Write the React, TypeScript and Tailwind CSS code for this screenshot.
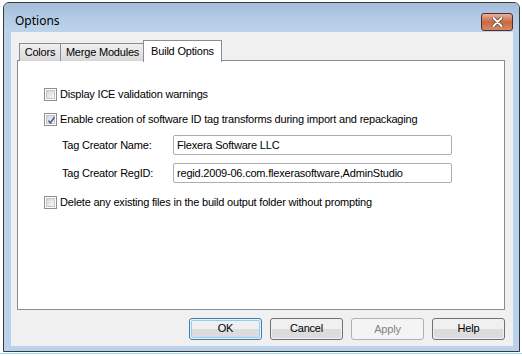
import React from "react";

const font = { fontFamily: '"Liberation Sans", Arial, sans-serif' };

function Checkbox({ checked }: { checked?: boolean }) {
  return (
    <div className="w-[13px] h-[13px] border border-[#8e8f8f] bg-white p-[1px] shrink-0">
      <div className="w-full h-full border border-[#c5c5c5] bg-gradient-to-br from-[#d8d8d8] to-[#f7f7f7] relative">
        {checked && (
          <svg viewBox="0 0 9 9" className="absolute inset-0 w-[9px] h-[9px]">
            <path d="M1.5 4.5 L3.5 7 L7.5 1" fill="none" stroke="#4b61a0" strokeWidth="1.6" />
          </svg>
        )}
      </div>
    </div>
  );
}

function Btn({ label, variant }: { label: string; variant?: "default" | "disabled" }) {
  if (variant === "disabled") {
    return (
      <div className="w-[73px] h-[22px] rounded-[3px] border border-[#adb2b5] bg-[#f4f4f4] flex items-center justify-center text-[#838383] text-[11px]">
        {label}
      </div>
    );
  }
  const border = variant === "default" ? "border-[#3c7fb1]" : "border-[#707070]";
  return (
    <div className={`w-[73px] h-[22px] rounded-[3px] border ${border} p-px`}>
      <div
        className={`w-full h-full rounded-[2px] flex flex-col ${variant === "default" ? "border border-[#8fd0f0]" : ""}`}
      >
        <div className="h-1/2 bg-[#f0f0f0] rounded-t-[2px]" />
        <div className="h-1/2 bg-[#dcdcdc] rounded-b-[2px]" />
      </div>
      <div className="relative -mt-[20px] h-[20px] flex items-center justify-center text-[11px] text-black">
        {label}
      </div>
    </div>
  );
}

export default function App() {
  return (
    <div className="w-[522px] h-[356px] bg-white overflow-hidden relative tracking-[-0.2px]" style={font}>
      <div className="ml-[3px] mt-[2px] w-[517px] h-[350px] border border-[#3a3a3a] rounded-t-[6px] bg-[#b9d1ea] flex flex-col overflow-hidden">
        {/* title bar */}
        <div className="h-[29px] shrink-0 bg-gradient-to-b from-[#a3bcd8] via-[#b3cbe5] to-[#bcd3eb] flex items-start pl-[11px] pr-[6px]">
          <div
            className="mt-[10px] text-[12px] text-black leading-[16px] tracking-normal"
            style={{ fontFamily: '"Noto Sans", "Open Sans", sans-serif' }}
          >
            Options
          </div>
          <div className="ml-auto mt-[10px] w-[32px] h-[18px] rounded-[3px] border border-[#5a2a2a] bg-gradient-to-b from-[#e6b2a0] via-[#c9683f] to-[#d48a64] flex items-center justify-center">
            <svg viewBox="0 0 12 10" className="w-[13px] h-[10px]">
              <path d="M2 1 L10 9 M10 1 L2 9" stroke="#5a3a30" strokeWidth="3.4" strokeLinecap="round" />
              <path d="M2 1 L10 9 M10 1 L2 9" stroke="#ffffff" strokeWidth="2" strokeLinecap="round" />
            </svg>
          </div>
        </div>
        {/* client */}
        <div className="ml-[7px] w-[502px] h-[314px] bg-[#f0f0f0] flex flex-col pl-[6px] pr-[8px] pt-[8px]">
          {/* tabs */}
          <div className="flex items-end h-[21px] pl-[2px] text-[11px] text-black relative z-10">
            <div className="h-[18px] w-[42px] justify-center border border-b-0 border-[#898c95] bg-gradient-to-b from-[#f0f0f0] to-[#d8d8d8] flex items-center">
              Colors
            </div>
            <div className="h-[18px] w-[84px] justify-center border border-b-0 border-l-0 border-[#898c95] bg-gradient-to-b from-[#f0f0f0] to-[#d8d8d8] flex items-center">
              Merge Modules
            </div>
            <div className="-ml-[2px] h-[22px] w-[79px] justify-center -mb-px pb-px border border-b-0 border-[#898c95] bg-white flex items-center">
              Build Options
            </div>
          </div>
          <div className="h-[250px] -mt-px border border-[#898c95] bg-white text-[11px] text-black pt-[27px] pl-[26px]">
            <div className="flex items-center gap-[3px] h-[13px]">
              <Checkbox />
              <span>Display ICE validation warnings</span>
            </div>
            <div className="flex items-center gap-[3px] h-[13px] mt-[12px]">
              <Checkbox checked />
              <span>Enable creation of software ID tag transforms during import and repackaging</span>
            </div>
            <div className="flex items-center h-[20px] mt-[9px] pl-[18px]">
              <span className="w-[111px]">Tag Creator Name:</span>
              <div className="w-[279px] h-[20px] border border-[#abadb3] rounded-[2px] flex items-center px-[3px]">
                Flexera Software LLC
              </div>
            </div>
            <div className="flex items-center h-[20px] mt-[8px] pl-[18px]">
              <span className="w-[111px]">Tag Creator RegID:</span>
              <div className="w-[279px] h-[20px] border border-[#abadb3] rounded-[2px] flex items-center px-[3px]">
                regid.2009-06.com.flexerasoftware,AdminStudio
              </div>
            </div>
            <div className="flex items-center gap-[3px] h-[13px] mt-[13px]">
              <Checkbox />
              <span>Delete any existing files in the build output folder without prompting</span>
            </div>
          </div>
          <div className="flex justify-end gap-[8px] mt-[8px] pr-[0px]">
            <Btn label="OK" variant="default" />
            <Btn label="Cancel" />
            <Btn label="Apply" variant="disabled" />
            <Btn label="Help" />
          </div>
        </div>
      </div>
      <div className="absolute left-0 top-[353px] w-[522px] h-px bg-[#9fd8ea]" />
    </div>
  );
}
